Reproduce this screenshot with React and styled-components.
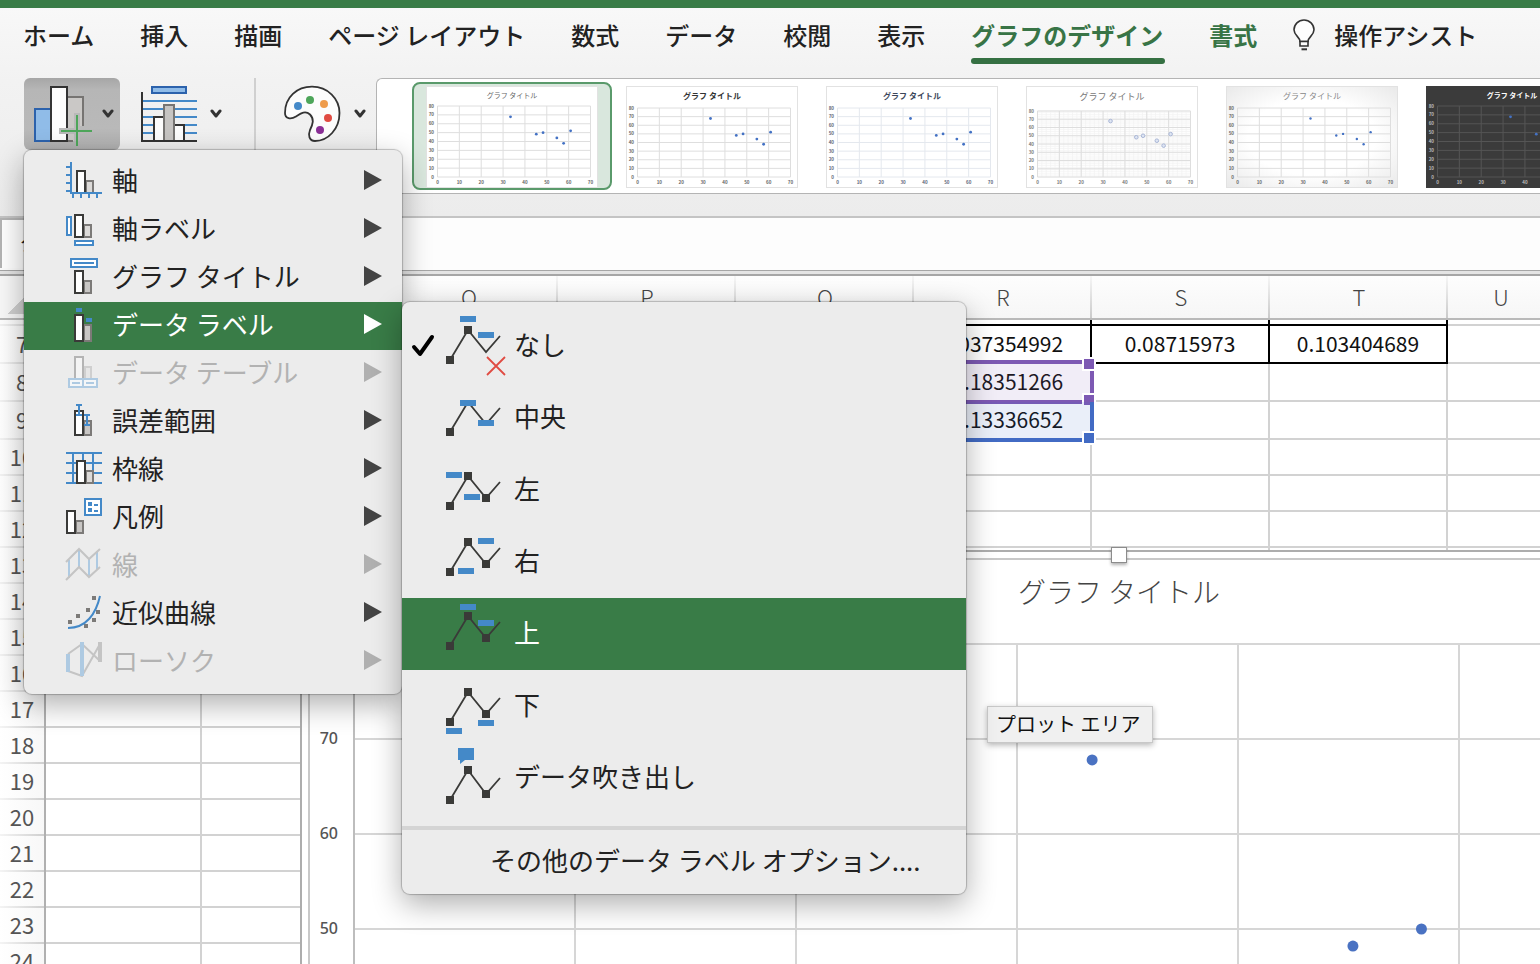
import React from "react";
import styled, { createGlobalStyle, css } from "styled-components";

const GREEN = "#397c47";
const BLUE = "#4489c8";
const INK = "#3a3a38";
const FONT = '"Noto Sans CJK JP", "Noto Sans", sans-serif';

const GlobalStyle = createGlobalStyle`
  *, *::before, *::after { box-sizing: border-box; }
  body { margin: 0; background: #fff; font-family: ${FONT}; color: #222; overflow: hidden; }
  button, input { font: inherit; color: inherit; }
  ul { list-style: none; margin: 0; padding: 0; }
`;

const Window = styled.div`
  display: flex;
  flex-direction: column;
  height: 100vh;
  overflow: hidden;
  border-top: 8px solid ${GREEN};
`;

/* ---------- Ribbon ---------- */

const RibbonArea = styled.header`
  flex: none;
  background: linear-gradient(#f8f8f8, #f2f2f2 35%, #ececec);
  border-bottom: 2px solid #c4c4c4;
`;

const Tabs = styled.nav`
  display: flex;
  gap: 46px;
  padding-left: 23px;
  height: 62px;
  white-space: nowrap;
`;

const Tab = styled.button`
  position: relative;
  height: 56px;
  padding: 0 0 2px;
  border: 0;
  background: none;
  font-size: 24px;
  line-height: 54px;
  font-weight: ${(p) => (p.$accent ? 700 : 500)};
  color: ${(p) => (p.$accent ? "#387446" : "#222")};
  ${(p) =>
    p.$active &&
    css`
      &::after {
        content: "";
        position: absolute;
        left: 0;
        right: -2px;
        bottom: 0;
        height: 6px;
        border-radius: 3px;
        background: #357043;
      }
    `}
`;

const AssistGroup = styled(Tab)`
  display: flex;
  align-items: center;
  gap: 18px;
  margin-left: -11px;
`;

const RibbonRow = styled.div`
  display: flex;
  align-items: flex-start;
  padding: 8px 0 22px 24px;
`;

const ToolSlot = styled.div`
  position: relative;
  flex: none;
  margin-right: ${(p) => p.$after}px;
`;

const ToolButton = styled.button`
  display: flex;
  align-items: center;
  gap: 6px;
  width: 96px;
  height: 72px;
  padding: 0 0 0 8px;
  border: 0;
  border-radius: 6px;
  background: ${(p) =>
    p.$pressed ? "linear-gradient(#a6a6a6, #b6b6b6 16%, #b9b9b9 70%, #b0b0b0)" : "none"};
  svg { flex: none; }
`;

const Divider = styled.div`
  flex: none;
  width: 2px;
  height: 112px;
  margin: 0 20px 0 0;
  background: #d0d0d0;
`;

const Gallery = styled.div`
  flex: 1;
  min-width: 0;
  display: flex;
  height: 116px;
  padding: 3px 0 0 35px;
  overflow: hidden;
  border: 1px solid #b4b4b4;
  border-right: 0;
  border-radius: 6px 0 0 6px;
  background: #fff;
`;

const StyleTile = styled.button`
  flex: none;
  display: grid;
  place-items: end center;
  width: 200px;
  height: 108px;
  padding: 0;
  border: 2px solid ${(p) => (p.$selected ? "#5a9a6b" : "transparent")};
  border-radius: 8px;
  background: ${(p) => (p.$selected ? "#d9e7dd" : "none")};
  svg { display: block; }
`;

/* ---------- Menus ---------- */

const menuPanel = css`
  position: absolute;
  padding: 8px 0;
  border-radius: 8px;
  background: #ececec;
  box-shadow: 0 0 1px 1px rgba(0, 0, 0, 0.22), 0 10px 30px rgba(0, 0, 0, 0.32);
`;

const Menu = styled.ul`
  ${menuPanel}
  top: 72px;
  left: 0;
  z-index: 10;
  width: 378px;
`;

const SubMenu = styled.ul`
  ${menuPanel}
  top: 0;
  left: 100%;
  width: 564px;
`;

const MenuEntry = styled.li`
  position: relative;
  z-index: ${(p) => (p.$open ? 1 : "auto")};
`;

const MenuButton = styled.button`
  display: flex;
  align-items: center;
  width: 100%;
  height: 48px;
  padding: 0 20px 0 40px;
  border: 0;
  text-align: left;
  white-space: nowrap;
  font-size: 26px;
  line-height: 44px;
  background: ${(p) => (p.$on ? GREEN : "none")};
  color: ${(p) => (p.$on ? "#fff" : p.disabled ? "#b2b2b2" : "#222")};
  svg { flex: none; }
`;

const MenuLabel = styled.span`
  flex: 1;
  padding: 0 0 4px 8px;
`;

const Arrow = styled.span`
  width: 18px;
  height: 20px;
  margin-bottom: 4px;
  background: ${(p) => (p.$on ? "#fff" : p.$off ? "#b0b0b0" : "#444")};
  clip-path: polygon(0 0, 100% 50%, 0 100%);
`;

const OptionButton = styled(MenuButton)`
  height: 72px;
  padding: 0;
`;

const OptionLabel = styled(MenuLabel)`
  padding-left: 6px;
`;

const CheckGutter = styled.span`
  display: flex;
  width: 42px;
  padding-left: 9px;
`;

const MoreButton = styled(MenuButton)`
  padding: 0 0 4px 88px;
`;

const Separator = styled.li`
  height: 4px;
  margin: 12px 0 8px;
  background: #d4d4d4;
`;

/* ---------- Formula bar and sheet ---------- */

const FormulaBar = styled.div`
  flex: none;
  display: flex;
  height: 52px;
  background: #fdfdfd;
`;

const NameBox = styled.input`
  width: 260px;
  height: 50px;
  padding: 0 0 8px 18px;
  border: 2px solid #b4b4b4;
  border-bottom: 0;
  background: #fff;
  font-size: 22px;
`;

const FormulaInput = styled.input`
  flex: 1;
  min-width: 0;
  border: 0;
  background: transparent;
`;

const SplitLine = styled.div`
  flex: none;
  height: 6px;
  border: solid #a6a6a6;
  border-width: 1px 0 2px;
  background: #e4e4e4;
`;

const SheetArea = styled.main`
  position: relative;
  flex: 1;
  min-height: 0;
  overflow: hidden;
`;

const Sheet = styled.table`
  width: 100%;
  table-layout: fixed;
  border-collapse: separate;
  border-spacing: 0;
  font-size: 22px;
  line-height: 32px;
  color: #111;
`;

const Corner = styled.td`
  padding: 0;
  border-bottom: 2px solid #b9b9b9;
  border-right: 2px solid #d8d8d8;
  background: linear-gradient(135deg, transparent 50%, #cfcfcf 50%) no-repeat 8px 8px / 30px 30px, #f8f8f8;
`;

const ColumnHead = styled.th`
  height: 44px;
  padding: 0 0 4px;
  font-weight: 300;
  color: #444;
  background:
    linear-gradient(#b9b9b9, #b9b9b9) no-repeat left bottom / 100% 2px,
    linear-gradient(#f6f6f6, #c8c8c8) no-repeat right top / 2px 100%,
    linear-gradient(#fdfdfd, #f6f6f6);
`;

const RowHead = styled.th`
  height: ${(p) => p.$h}px;
  padding: 0 0 ${(p) => (p.$h > 6 ? 4 : 0)}px;
  font-weight: 400;
  color: #555;
  border-right: 2px solid #b0b0b0;
  background:
    linear-gradient(90deg, #f4f4f4, #cfcfcf) no-repeat left bottom / 100% 2px,
    linear-gradient(90deg, #fff, #f8f8f8);
`;

const Cell = styled.td`
  position: relative;
  padding: 0 0 ${(p) => (p.$filled ? 2 : 0)}px;
  font-size: 21px;
  text-align: center;
  border-right: 2px solid ${(p) => (p.$boxed ? "#000" : "#d2d2d2")};
  border-bottom: 2px solid ${(p) => (p.$boxed ? "#000" : "#d2d2d2")};
`;

const Range = styled.div`
  position: absolute;
  z-index: 1;
  top: ${(p) => (p.$joined ? 0 : -4)}px;
  right: -4px;
  bottom: -4px;
  width: 718px;
  border: 4px solid ${(p) => p.$color};
  border-top-width: ${(p) => (p.$joined ? 0 : 4)}px;
  background: ${(p) => p.$fill};
`;

const Grip = styled.i`
  position: absolute;
  right: -6px;
  ${(p) => p.$side}: -7px;
  width: 14px;
  height: 14px;
  border: 2px solid #fff;
  background: ${(p) => p.$color};
`;

const ChartFrame = styled.section`
  position: absolute;
  z-index: 2;
  top: 274px;
  left: 300px;
  width: 1638px;
  padding: 6px;
  border: 2px solid #adadad;
  background: #fff;
`;

const ChartInner = styled.div`
  border: 2px solid #c8c8c8;
  svg { display: block; }
`;

const TopHandle = styled.i`
  position: absolute;
  top: -5px;
  left: calc(50% - 8px);
  width: 16px;
  height: 16px;
  border: 1px solid #8c8c8c;
  background: #fff;
  box-shadow: 0 2px 3px rgba(0, 0, 0, 0.3);
`;

const Tooltip = styled.div`
  position: absolute;
  top: 154px;
  left: 685px;
  height: 37px;
  padding: 0 12px 0 8px;
  border: 1px solid #c8c8c8;
  background: #f0f0f0;
  box-shadow: 0 2px 6px rgba(0, 0, 0, 0.3);
  font-size: 20px;
  line-height: 34px;
  white-space: nowrap;
  color: #111;
`;

/* ---------- Icons ---------- */

function Chevron() {
  return (
    <svg width="12" height="10" viewBox="0 0 12 10" fill="none" stroke="#333" strokeWidth="3" strokeLinecap="round" strokeLinejoin="round" aria-hidden="true">
      <path d="M2 2l4 5 4-5" />
    </svg>
  );
}

function Bulb() {
  return (
    <svg width="24" height="32" viewBox="0 0 24 32" fill="#fdfdfd" stroke="#333" strokeWidth="1.6" aria-hidden="true">
      <path d="M8 22.500C8 18 2 16.500 2 10.800a10 9.800 0 0 1 20 0C22 16.500 16 18 16 22.500z" />
      <path d="M8 22.500h8V27H8z" />
      <path d="M9.500 30.300h5.500" strokeWidth="2" />
    </svg>
  );
}

function AddElementIcon() {
  return (
    <svg width="64" height="64" viewBox="0 0 64 64" fill="none" strokeWidth="2" aria-hidden="true">
      <path d="M36 15h15v29h-9v15h-6z" fill="#cac8c6" />
      <path d="M36 15h15v29M36 59h5" stroke="#767472" />
      <path d="M3 27h16v32H3z" fill="#90bce8" stroke="#2c62ac" />
      <path d="M19 5h16v54H19z" fill="#fcfcfc" stroke="#333" />
      <path d="M45 31v28M27 49h24" stroke="#b9b9b9" strokeWidth="6" />
      <path d="M45 33v31M29 49h31" stroke="#4ea65a" />
    </svg>
  );
}

function QuickLayoutIcon() {
  return (
    <svg width="64" height="64" viewBox="0 0 64 64" fill="#fcfcfc" strokeWidth="2" aria-hidden="true">
      <path d="M3 19h54M3 27h54M3 35h54M3 43h54M3 51h54" stroke={BLUE} />
      <path d="M12 5h34v6H12z" fill="#90bce8" stroke="#2c62ac" />
      <path d="M14 35h10v24H14zM34 43h10v16H34z" stroke="#333" />
      <path d="M24 23h10v36H24z" fill="#c6c4c2" stroke="#767472" />
      <path d="M2 10v49h55" fill="none" stroke="#333" />
    </svg>
  );
}

function PaletteIcon() {
  return (
    <svg width="64" height="64" viewBox="0 0 64 64" aria-hidden="true">
      <path
        d="M1 31C1 15 13 4.700 28 4.700C44 4.700 55.500 17 55.500 31C55.500 47 44 59 31 59C25 59 24 53 26 48C29 42 30.500 37 26 32.500C21 28 16 32 12 34.500C7 37.500 1 37 1 31Z"
        fill="#fcfcfc"
        stroke="#333"
        strokeWidth="1.800"
      />
      <circle cx="14" cy="24" r="4" fill={BLUE} />
      <circle cx="26" cy="18" r="4" fill="#4ea65a" />
      <circle cx="40" cy="22" r="4" fill="#ee9b4b" />
      <circle cx="44" cy="36" r="4" fill="#e04b42" />
      <circle cx="36" cy="48" r="4" fill="#8a2f96" />
    </svg>
  );
}

function TwoBars({ x, y, h = 24, gh = 14, gray = "#c8c6c4" }) {
  return (
    <>
      <rect x={x + 10} y={y + h - gh + 1} width="7" height={gh - 2} fill={gray} stroke="#7c7a78" />
      <rect x={x + 1} y={y + 1} width="8" height={h - 2} fill="#fff" stroke={INK} />
    </>
  );
}

const ELEMENT_ICONS = {
  axis: (
    <>
      <TwoBars x={12} y={12} gray="#dcdad8" />
      <path d="M7 4v31M6 35h32M2 9h5M2 17h5M2 25h5M2 33h5M9 35v5M17 35v5M25 35v5M33 35v5" stroke={BLUE} />
    </>
  ),
  axisLabel: (
    <>
      <TwoBars x={10} y={8} gray="#dcdad8" />
      <path d="M3 11h4v18H3zM11 35h18v4H11z" fill="#fff" stroke={BLUE} />
    </>
  ),
  title: (
    <>
      <TwoBars x={10} y={16} />
      <path d="M7 5h26v8H7z" fill="#fff" stroke={BLUE} />
      <path d="M10 9h20" stroke={BLUE} />
    </>
  ),
  dataLabel: (
    <>
      <TwoBars x={10} y={12} h={28} gh={18} />
      <path d="M12 6h6v4h-6zM22 16h6v4h-6z" fill={BLUE} />
    </>
  ),
  dataTable: (
    <g>
      <path d="M21 17h6v12h-6z" fill="#e6e6e6" stroke="#cfcfcf" />
      <path d="M11 7h8v22h-8z" fill="#f4f4f4" stroke="#b4b4b4" />
      <path d="M5 29h28v8H5zM19 29v8M8 33h8M22 33h8" fill="#f4f6f8" stroke="#aecae2" />
    </g>
  ),
  errorBars: (
    <>
      <TwoBars x={10} y={12} h={26} gh={16} />
      <path d="M12 7h6M12 17h6M15 7v10M20 17h6M20 27h6M23 17v10" stroke={BLUE} />
    </>
  ),
  gridlines: (
    <>
      <path d="M2 7h36M2 17h36M2 27h36M2 37h36M9 7v30M19 7v30M29 7v30" stroke={BLUE} />
      <TwoBars x={12} y={14} gray="#dcdad8" />
    </>
  ),
  legend: (
    <>
      <TwoBars x={2} y={16} />
      <path d="M21 5h16v16H21z" fill="#fff" stroke={BLUE} />
      <path d="M24 8h4v4h-4zM24 14h4v4h-4zM30 10h4v2h-4zM30 16h4v2h-4z" fill={BLUE} />
    </>
  ),
  lines: (
    <>
      <path d="M5 18v18M15 8v18M25 17v18M33 9v18" stroke="#aecae2" />
      <path d="M2 20L15 7l10 10L36 7M2 38l13-13 10 10 11-10" stroke="#c4c4c4" />
    </>
  ),
  trend: (
    <>
      <path d="M4 30h4v4H4zM12 24h4v4h-4zM22 18h4v4h-4zM28 6h4v4h-4zM32 20h4v4h-4zM28 28h4v4h-4zM20 34h4v4h-4z" fill="#7c7a78" />
      <path d="M4 38C22 38 32 24 36 6" stroke={BLUE} />
    </>
  ),
  upDown: (
    <>
      <path d="M4 16L18 6l18 17M4 33l14 5L36 6" stroke="#c4c4c4" />
      <path d="M34 4h4v20h-4z" fill="#c4c4c4" />
      <path d="M2 16h4v18H2zM16 4h4v34h-4z" fill="#aecae2" />
    </>
  ),
};

function ElementIcon({ name }) {
  return (
    <svg width="40" height="48" viewBox="0 0 40 48" fill="none" strokeWidth="2" aria-hidden="true">
      {ELEMENT_ICONS[name]}
    </svg>
  );
}

function PositionIcon({ peak, bars, nodes = [0, 1, 2], dip = 22, rise = 10, cross, callout }) {
  const points = [[6, peak + 30], [24, peak], [42, peak + dip]];
  return (
    <svg width="64" height="72" viewBox="0 0 64 72" aria-hidden="true">
      <path d={`M6 ${peak + 30}L24 ${peak}L42 ${peak + dip}L56 ${peak + rise - 4}`} fill="none" stroke={INK} strokeWidth="1.800" />
      {nodes.map((n) => (
        <rect key={n} x={points[n][0] - 4} y={points[n][1] - 4} width="8" height="8" fill={INK} />
      ))}
      {bars.map(([x, y]) => (
        <rect key={`${x}-${y}`} x={x} y={y} width="16" height="6" fill={BLUE} />
      ))}
      {cross && <path d="M43 47l18 18M61 47L43 65" stroke="#e04b42" strokeWidth="1.800" />}
      {callout && <path d="M14 6h16v12h-9l-5 4v-4h-2z" fill={BLUE} />}
    </svg>
  );
}

function CheckMark() {
  return (
    <svg width="24" height="24" viewBox="0 0 24 24" fill="none" stroke="#000" strokeWidth="4" strokeLinecap="round" strokeLinejoin="round" aria-hidden="true">
      <path d="M3 13l6 7L21 3" />
    </svg>
  );
}

/* ---------- Charts ---------- */

const DATA = [[33.4, 67.8], [45.2, 48.2], [48.3, 50], [54.6, 44], [57.7, 38], [60.9, 52]];

function Thumbnail({ look }) {
  const { top = 22, size = 8, bold, ink = "#666", bg = "#fff", grid = "#dedede", edge = "#e2e2e2", dot = "#4472c4", r = 1.4, ring, minor } = look;
  const left = 11.5;
  const stepX = 153 / 7;
  const stepY = (91 - top) / 8;
  const px = (v) => left + (v / 10) * stepX;
  const py = (v) => 91 - (v / 10) * stepY;
  const tens = [0, 1, 2, 3, 4, 5, 6, 7];
  return (
    <svg width="172" height="102" viewBox="0 0 172 102" fontFamily="Noto Sans CJK JP, sans-serif">
      <defs>
        <radialGradient id="paper" r="0.75">
          <stop offset="0.5" stopColor="#fff" />
          <stop offset="1" stopColor="#e6e6e6" />
        </radialGradient>
      </defs>
      <rect x="0.5" y="0.5" width="171" height="101" fill={bg} stroke={edge} />
      <text x="86" y={top / 2 + 1.5} fontSize={size} fontWeight={bold ? 700 : 400} fill={look.titleInk || ink} textAnchor="middle">
        グラフ タイトル
      </text>
      {minor &&
        Array.from({ length: 36 }, (_, i) => (
          <path key={i} d={`M${px(i * 2)} ${top}V91M${left} ${py(Math.min(i * 2.3, 80))}H164.500`} stroke="#f2f2f2" strokeWidth="0.7" />
        ))}
      <g stroke={grid} strokeWidth="1">
        {tens.map((n) => (
          <path key={n} d={`M${px(n * 10)} ${top}V91`} />
        ))}
        {[...tens, 8].map((n) => (
          <path key={n} d={`M${left} ${py(n * 10)}H164.500`} />
        ))}
      </g>
      <g fill={ink} fontSize="4.500" fontWeight="700">
        {tens.map((n) => (
          <text key={n} x={px(n * 10)} y="98" textAnchor="middle">{n * 10}</text>
        ))}
        {[...tens, 8].map((n) => (
          <text key={n} x="8" y={py(n * 10) + 1.5} textAnchor="end">{n * 10}</text>
        ))}
      </g>
      {DATA.map(([x, y]) => (
        <circle key={x} cx={px(x)} cy={py(y)} r={r} fill={ring ? "#dfe6f3" : dot} stroke={ring ? "#a9b6d6" : "none"} />
      ))}
    </svg>
  );
}

const LOOKS = [
  { top: 20, size: 7 },
  { bold: true, titleInk: "#333" },
  { bold: true, titleInk: "#3c465a", ink: "#5c6478", grid: "#e4e8ee" },
  { top: 25, size: 9, ring: true, r: 1.8, minor: true, ink: "#777" },
  { bg: "url(#paper)", r: 1.2, titleInk: "#888" },
  { top: 20, size: 7, bold: true, bg: "#3b3b3b", edge: "#3b3b3b", grid: "#555", ink: "#bbb", titleInk: "#fff" },
];

function ScatterChart() {
  const px = (v) => 44 + v * 22.1;
  const py = (v) => 844 - v * 9.5;
  return (
    <svg width="1618" height="900" viewBox="0 0 1618 900" role="img" aria-label="グラフ タイトル">
      <text x="809" y="43" fontSize="28" fontWeight="300" fill="#444" textAnchor="middle" fontFamily="Noto Sans CJK JP, sans-serif">
        グラフ タイトル
      </text>
      <g stroke="#d6d6d6" strokeWidth="2">
        {[10, 20, 30, 40, 50, 60, 70].map((n) => (
          <path key={n} d={`M${px(n)} 84V844`} />
        ))}
        {[0, 10, 20, 30, 40, 50, 60, 70, 80].map((n) => (
          <path key={n} d={`M44 ${py(n)}H1591`} />
        ))}
      </g>
      <path d="M44 84V844" stroke="#bdbdbd" strokeWidth="2" />
      <g fill="#555" fontSize="16" fontFamily="Noto Sans, sans-serif" fontWeight="500" textAnchor="end">
        {[40, 50, 60, 70, 80].map((n) => (
          <text key={n} x="28" y={py(n) + 5}>{n}</text>
        ))}
      </g>
      {DATA.map(([x, y]) => (
        <circle key={x} cx={px(x)} cy={py(y)} r="5.500" fill="#4a72c2" />
      ))}
    </svg>
  );
}

/* ---------- Content ---------- */

const TABS = ["ホーム", "挿入", "描画", "ページ レイアウト", "数式", "データ", "校閲", "表示", "グラフのデザイン", "書式"];

const ELEMENTS = [
  { icon: "axis", label: "軸" },
  { icon: "axisLabel", label: "軸ラベル" },
  { icon: "title", label: "グラフ タイトル" },
  { icon: "dataLabel", label: "データ ラベル", open: true },
  { icon: "dataTable", label: "データ テーブル", off: true },
  { icon: "errorBars", label: "誤差範囲" },
  { icon: "gridlines", label: "枠線" },
  { icon: "legend", label: "凡例" },
  { icon: "lines", label: "線", off: true },
  { icon: "trend", label: "近似曲線" },
  { icon: "upDown", label: "ローソク", off: true },
];

const POSITIONS = [
  { label: "なし", checked: true, icon: { peak: 20, bars: [[16, 6], [34, 22]], nodes: [0, 1], cross: true } },
  { label: "中央", icon: { peak: 20, bars: [[16, 18], [34, 38]], nodes: [0] } },
  { label: "左", icon: { peak: 22, bars: [[2, 18], [20, 40]] } },
  { label: "右", icon: { peak: 16, bars: [[34, 12], [14, 42]] } },
  { label: "上", on: true, icon: { peak: 18, bars: [[16, 6], [34, 22]] } },
  { label: "下", icon: { peak: 22, bars: [[34, 50], [2, 58]] } },
  { label: "データ吹き出し", icon: { peak: 28, bars: [], dip: 24, rise: 12, callout: true } },
];

const COLUMNS = ["M", "N", "O", "P", "Q", "R", "S", "T", "U", "V"];
const WIDTHS = [156, 178, 178, 178, 178, 178, 178, 178, 106, 106];
const ROWS = Array.from({ length: 22 }, (_, i) => i + 6);
const VALUES = {
  R7: "0.037354992",
  S7: "0.08715973",
  T7: "0.103404689",
  R8: "−0.18351266",
  R9: "−0.13336652",
};
const RANGES = {
  R8: { color: "#7d59b3", fill: "rgba(125, 89, 179, 0.11)" },
  R9: { color: "#426bc4", fill: "rgba(66, 107, 196, 0.11)", joined: true },
};
const rowHeight = (n) => (n === 6 ? 6 : n < 10 ? 38 : 36);
const isBoxed = (c, n) => n < 8 && "OPQRST".includes(c);

function LabelSubMenu() {
  return (
    <SubMenu role="menu" aria-label="データ ラベル">
      {POSITIONS.map((p) => (
        <li key={p.label} role="none">
          <OptionButton role="menuitemradio" aria-checked={!!p.checked} $on={p.on}>
            <CheckGutter>{p.checked && <CheckMark />}</CheckGutter>
            <PositionIcon {...p.icon} />
            <OptionLabel>{p.label}</OptionLabel>
          </OptionButton>
        </li>
      ))}
      <Separator role="separator" />
      <li role="none">
        <MoreButton role="menuitem">その他のデータ ラベル オプション....</MoreButton>
      </li>
    </SubMenu>
  );
}

function ElementMenu() {
  return (
    <Menu role="menu" aria-label="グラフ要素を追加">
      {ELEMENTS.map((e) => (
        <MenuEntry key={e.icon} role="none" $open={e.open}>
          <MenuButton role="menuitem" aria-haspopup="menu" $on={e.open} disabled={e.off}>
            <ElementIcon name={e.icon} />
            <MenuLabel>{e.label}</MenuLabel>
            <Arrow $on={e.open} $off={e.off} />
          </MenuButton>
          {e.open && <LabelSubMenu />}
        </MenuEntry>
      ))}
    </Menu>
  );
}

export default function App() {
  return (
    <>
      <GlobalStyle />
      <Window>
        <RibbonArea>
          <Tabs>
            {TABS.map((t) => (
              <Tab key={t} $accent={t === "グラフのデザイン" || t === "書式"} $active={t === "グラフのデザイン"}>
                {t}
              </Tab>
            ))}
            <AssistGroup>
              <Bulb />
              操作アシスト
            </AssistGroup>
          </Tabs>
          <RibbonRow>
            <ToolSlot $after={12}>
              <ToolButton $pressed aria-label="グラフ要素を追加" aria-expanded="true">
                <AddElementIcon />
                <Chevron />
              </ToolButton>
              <ElementMenu />
            </ToolSlot>
            <ToolSlot $after={26}>
              <ToolButton aria-label="クイック レイアウト">
                <QuickLayoutIcon />
                <Chevron />
              </ToolButton>
            </ToolSlot>
            <Divider />
            <ToolSlot $after={4}>
              <ToolButton aria-label="色の変更">
                <PaletteIcon />
                <Chevron />
              </ToolButton>
            </ToolSlot>
            <Gallery>
              {LOOKS.map((look, i) => (
                <StyleTile key={i} $selected={i === 0} aria-label={`スタイル ${i + 1}`}>
                  <Thumbnail look={look} />
                </StyleTile>
              ))}
            </Gallery>
          </RibbonRow>
        </RibbonArea>

        <FormulaBar>
          <NameBox aria-label="名前ボックス" defaultValue="グラフ 1" />
          <FormulaInput aria-label="数式バー" />
        </FormulaBar>
        <SplitLine />

        <SheetArea>
          <Sheet>
            <colgroup>
              <col width="46" />
              {WIDTHS.map((w, i) => (
                <col key={i} width={w} />
              ))}
            </colgroup>
            <thead>
              <tr>
                <Corner />
                {COLUMNS.map((c) => (
                  <ColumnHead key={c} scope="col">{c}</ColumnHead>
                ))}
              </tr>
            </thead>
            <tbody>
              {ROWS.map((n) => (
                <tr key={n}>
                  <RowHead scope="row" $h={rowHeight(n)}>{n > 6 && n}</RowHead>
                  {COLUMNS.map((c) => {
                    const range = RANGES[c + n];
                    return (
                      <Cell key={c} $boxed={isBoxed(c, n)} $filled={!!VALUES[c + n]}>
                        {VALUES[c + n]}
                        {range && (
                          <Range $color={range.color} $fill={range.fill} $joined={range.joined}>
                            {!range.joined && <Grip $side="top" $color={range.color} />}
                            <Grip $side="bottom" $color={range.color} />
                          </Range>
                        )}
                      </Cell>
                    );
                  })}
                </tr>
              ))}
            </tbody>
          </Sheet>
          <ChartFrame>
            <ChartInner>
              <ScatterChart />
            </ChartInner>
            <TopHandle />
            <Tooltip role="tooltip">プロット エリア</Tooltip>
          </ChartFrame>
        </SheetArea>
      </Window>
    </>
  );
}
